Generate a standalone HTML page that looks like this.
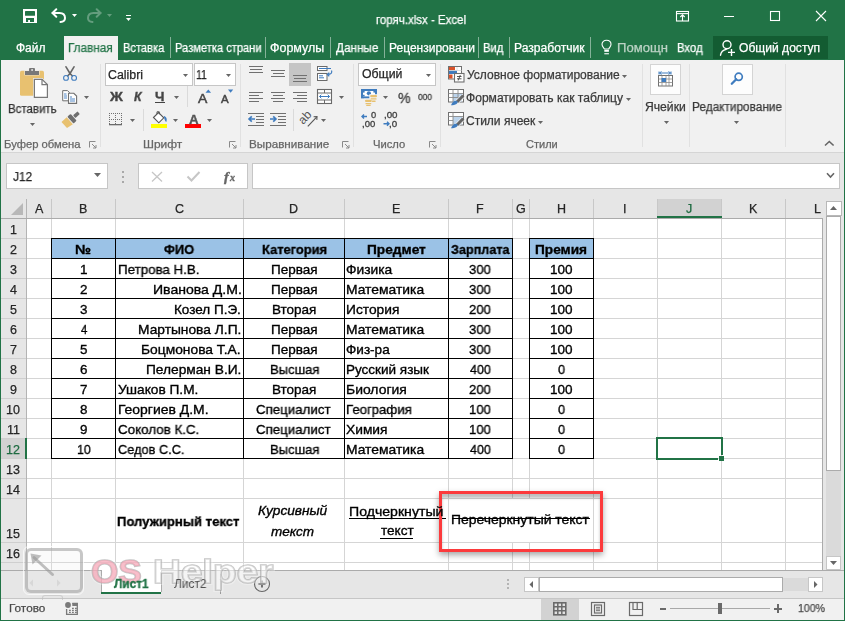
<!DOCTYPE html>
<html><head><meta charset="utf-8"><style>
html,body{margin:0;padding:0;width:845px;height:621px;overflow:hidden;background:#217346}
.a{position:absolute;box-sizing:content-box}
.t{white-space:nowrap;will-change:transform;-webkit-text-stroke-width:0.25px}
svg.a{overflow:visible}
</style></head><body>
<div class="a" style="left:64px;top:36px;width:54px;height:24px;background:#f1f1f1;"></div>
<div class="a" style="left:170px;top:37px;width:1px;height:21px;background:rgba(255,255,255,0.45);"></div>
<div class="a" style="left:265px;top:37px;width:1px;height:21px;background:rgba(255,255,255,0.45);"></div>
<div class="a" style="left:330px;top:37px;width:1px;height:21px;background:rgba(255,255,255,0.45);"></div>
<div class="a" style="left:384px;top:37px;width:1px;height:21px;background:rgba(255,255,255,0.45);"></div>
<div class="a" style="left:478px;top:37px;width:1px;height:21px;background:rgba(255,255,255,0.45);"></div>
<div class="a" style="left:509px;top:37px;width:1px;height:21px;background:rgba(255,255,255,0.45);"></div>
<div class="a" style="left:590px;top:37px;width:1px;height:21px;background:rgba(255,255,255,0.45);"></div>
<div class="a" style="left:713px;top:36px;width:115px;height:23px;background:#135c32;"></div>
<div class="a" style="left:1px;top:60px;width:843px;height:92px;background:#f1f1f1;"></div>
<div class="a" style="left:1px;top:152px;width:843px;height:1px;background:#d5d5d5;"></div>
<div class="a" style="left:100px;top:64px;width:1px;height:83px;background:#e1e1e1;"></div>
<div class="a" style="left:240px;top:64px;width:1px;height:83px;background:#e1e1e1;"></div>
<div class="a" style="left:353px;top:64px;width:1px;height:83px;background:#e1e1e1;"></div>
<div class="a" style="left:440px;top:64px;width:1px;height:83px;background:#e1e1e1;"></div>
<div class="a" style="left:642px;top:64px;width:1px;height:83px;background:#e1e1e1;"></div>
<div class="a" style="left:689px;top:64px;width:1px;height:83px;background:#e1e1e1;"></div>
<div class="a" style="left:785px;top:64px;width:1px;height:83px;background:#e1e1e1;"></div>
<div class="a" style="left:105px;top:63px;width:86px;height:21px;border:1px solid #c6c6c6;background:#fff;"></div>
<div class="a" style="left:194px;top:63px;width:40px;height:21px;border:1px solid #c6c6c6;background:#fff;"></div>
<div class="a" style="left:358px;top:63px;width:76px;height:21px;border:1px solid #c6c6c6;background:#fff;"></div>
<div class="a" style="left:650px;top:64px;width:29px;height:29px;border:1px solid #d4d4d4;background:#fdfdfd;"></div>
<div class="a" style="left:722px;top:64px;width:29px;height:29px;border:1px solid #d4d4d4;background:#fdfdfd;"></div>
<div class="a" style="left:1px;top:153px;width:843px;height:46px;background:#e6e6e6;"></div>
<div class="a" style="left:6px;top:163px;width:100px;height:24px;border:1px solid #c6c6c6;background:#fff;"></div>
<div class="a" style="left:138px;top:163px;width:108px;height:24px;border:1px solid #c6c6c6;background:#fff;"></div>
<div class="a" style="left:252px;top:163px;width:586px;height:24px;border:1px solid #c6c6c6;background:#fff;"></div>
<div class="a" style="left:1px;top:199px;width:822px;height:20px;background:#e6e6e6;"></div>
<div class="a" style="left:1px;top:219px;width:26px;height:351px;background:#e6e6e6;"></div>
<div class="a" style="left:27px;top:219px;width:795px;height:351px;background:#ffffff;"></div>
<div class="a" style="left:51px;top:219px;width:1px;height:351px;background:#d5d5d5;"></div>
<div class="a" style="left:115px;top:219px;width:1px;height:351px;background:#d5d5d5;"></div>
<div class="a" style="left:243px;top:219px;width:1px;height:351px;background:#d5d5d5;"></div>
<div class="a" style="left:344px;top:219px;width:1px;height:351px;background:#d5d5d5;"></div>
<div class="a" style="left:448px;top:219px;width:1px;height:351px;background:#d5d5d5;"></div>
<div class="a" style="left:512px;top:219px;width:1px;height:351px;background:#d5d5d5;"></div>
<div class="a" style="left:529px;top:219px;width:1px;height:351px;background:#d5d5d5;"></div>
<div class="a" style="left:593px;top:219px;width:1px;height:351px;background:#d5d5d5;"></div>
<div class="a" style="left:657px;top:219px;width:1px;height:351px;background:#d5d5d5;"></div>
<div class="a" style="left:721px;top:219px;width:1px;height:351px;background:#d5d5d5;"></div>
<div class="a" style="left:785px;top:219px;width:1px;height:351px;background:#d5d5d5;"></div>
<div class="a" style="left:27px;top:238px;width:795px;height:1px;background:#d5d5d5;"></div>
<div class="a" style="left:27px;top:258px;width:795px;height:1px;background:#d5d5d5;"></div>
<div class="a" style="left:27px;top:278px;width:795px;height:1px;background:#d5d5d5;"></div>
<div class="a" style="left:27px;top:298px;width:795px;height:1px;background:#d5d5d5;"></div>
<div class="a" style="left:27px;top:318px;width:795px;height:1px;background:#d5d5d5;"></div>
<div class="a" style="left:27px;top:338px;width:795px;height:1px;background:#d5d5d5;"></div>
<div class="a" style="left:27px;top:358px;width:795px;height:1px;background:#d5d5d5;"></div>
<div class="a" style="left:27px;top:378px;width:795px;height:1px;background:#d5d5d5;"></div>
<div class="a" style="left:27px;top:398px;width:795px;height:1px;background:#d5d5d5;"></div>
<div class="a" style="left:27px;top:418px;width:795px;height:1px;background:#d5d5d5;"></div>
<div class="a" style="left:27px;top:438px;width:795px;height:1px;background:#d5d5d5;"></div>
<div class="a" style="left:27px;top:458px;width:795px;height:1px;background:#d5d5d5;"></div>
<div class="a" style="left:27px;top:478px;width:795px;height:1px;background:#d5d5d5;"></div>
<div class="a" style="left:27px;top:498px;width:795px;height:1px;background:#d5d5d5;"></div>
<div class="a" style="left:27px;top:542px;width:795px;height:1px;background:#d5d5d5;"></div>
<div class="a" style="left:27px;top:562px;width:795px;height:1px;background:#d5d5d5;"></div>
<div class="a" style="left:512px;top:499px;width:80px;height:43px;background:#ffffff;"></div>
<div class="a" style="left:51px;top:199px;width:1px;height:19px;background:#c8c8c8;"></div>
<div class="a" style="left:115px;top:199px;width:1px;height:19px;background:#c8c8c8;"></div>
<div class="a" style="left:243px;top:199px;width:1px;height:19px;background:#c8c8c8;"></div>
<div class="a" style="left:344px;top:199px;width:1px;height:19px;background:#c8c8c8;"></div>
<div class="a" style="left:448px;top:199px;width:1px;height:19px;background:#c8c8c8;"></div>
<div class="a" style="left:512px;top:199px;width:1px;height:19px;background:#c8c8c8;"></div>
<div class="a" style="left:529px;top:199px;width:1px;height:19px;background:#c8c8c8;"></div>
<div class="a" style="left:593px;top:199px;width:1px;height:19px;background:#c8c8c8;"></div>
<div class="a" style="left:657px;top:199px;width:1px;height:19px;background:#c8c8c8;"></div>
<div class="a" style="left:721px;top:199px;width:1px;height:19px;background:#c8c8c8;"></div>
<div class="a" style="left:785px;top:199px;width:1px;height:19px;background:#c8c8c8;"></div>
<div class="a" style="left:26px;top:199px;width:1px;height:371px;background:#b4b4b4;"></div>
<div class="a" style="left:1px;top:218px;width:822px;height:1px;background:#ababab;"></div>
<div class="a" style="left:1px;top:238px;width:25px;height:1px;background:#cfcfcf;"></div>
<div class="a" style="left:1px;top:258px;width:25px;height:1px;background:#cfcfcf;"></div>
<div class="a" style="left:1px;top:278px;width:25px;height:1px;background:#cfcfcf;"></div>
<div class="a" style="left:1px;top:298px;width:25px;height:1px;background:#cfcfcf;"></div>
<div class="a" style="left:1px;top:318px;width:25px;height:1px;background:#cfcfcf;"></div>
<div class="a" style="left:1px;top:338px;width:25px;height:1px;background:#cfcfcf;"></div>
<div class="a" style="left:1px;top:358px;width:25px;height:1px;background:#cfcfcf;"></div>
<div class="a" style="left:1px;top:378px;width:25px;height:1px;background:#cfcfcf;"></div>
<div class="a" style="left:1px;top:398px;width:25px;height:1px;background:#cfcfcf;"></div>
<div class="a" style="left:1px;top:418px;width:25px;height:1px;background:#cfcfcf;"></div>
<div class="a" style="left:1px;top:438px;width:25px;height:1px;background:#cfcfcf;"></div>
<div class="a" style="left:1px;top:458px;width:25px;height:1px;background:#cfcfcf;"></div>
<div class="a" style="left:1px;top:478px;width:25px;height:1px;background:#cfcfcf;"></div>
<div class="a" style="left:1px;top:498px;width:25px;height:1px;background:#cfcfcf;"></div>
<div class="a" style="left:1px;top:542px;width:25px;height:1px;background:#cfcfcf;"></div>
<div class="a" style="left:1px;top:562px;width:25px;height:1px;background:#cfcfcf;"></div>
<div class="a" style="left:658px;top:199px;width:63px;height:19px;background:#d2d2d2;"></div>
<div class="a" style="left:657px;top:216px;width:65px;height:2px;background:#217346;"></div>
<div class="a" style="left:1px;top:439px;width:25px;height:19px;background:#d2d2d2;"></div>
<div class="a" style="left:25px;top:438px;width:2px;height:21px;background:#217346;"></div>
<svg class="a" style="left:11px;top:203px;" width="13" height="13" viewBox="0 0 13 13"><path d="M12 0 L12 12 L0 12 Z" fill="#b8b8b8"/></svg>
<div class="a" style="left:822px;top:219px;width:1px;height:351px;background:#ababab;"></div>
<div class="a" style="left:823px;top:199px;width:21px;height:371px;background:#e6e6e6;"></div>
<div class="a" style="left:826px;top:201px;width:14px;height:13px;border:1px solid #b8b8b8;background:#fff;"></div>
<div class="a" style="left:826px;top:216px;width:13px;height:253px;border:1px solid #ababab;background:#fff;"></div>
<div class="a" style="left:826px;top:471px;width:15px;height:85px;background:#dadada;"></div>
<div class="a" style="left:826px;top:556px;width:13px;height:12px;border:1px solid #c6c6c6;background:#fff;"></div>
<svg class="a" style="left:829px;top:204px;" width="9" height="8" viewBox="0 0 9 8"><path d="M1 6 L4.5 2 L8 6 Z" fill="#666"/></svg>
<svg class="a" style="left:829px;top:559px;" width="9" height="8" viewBox="0 0 9 8"><path d="M1 2 L4.5 6 L8 2 Z" fill="#666"/></svg>
<div class="a" style="left:1px;top:570px;width:843px;height:1px;background:#ababab;"></div>
<div class="a" style="left:1px;top:571px;width:843px;height:27px;background:#e6e6e6;"></div>
<div class="a" style="left:1px;top:598px;width:843px;height:1px;background:#c6c6c6;"></div>
<div class="a" style="left:1px;top:599px;width:843px;height:21px;background:#f1f1f1;"></div>
<div class="a" style="left:101px;top:570px;width:60px;height:24px;background:#ffffff;"></div>
<div class="a" style="left:101px;top:592px;width:60px;height:2px;background:#217346;"></div>
<div class="a" style="left:101px;top:570px;width:1px;height:22px;background:#ababab;"></div>
<div class="a" style="left:161px;top:570px;width:1px;height:22px;background:#ababab;"></div>
<div class="a" style="left:220px;top:574px;width:1px;height:20px;background:#9a9a9a;"></div>
<div class="a" style="left:524px;top:577px;width:13px;height:13px;border:1px solid #c6c6c6;background:#fff;"></div>
<div class="a" style="left:539px;top:577px;width:242px;height:13px;border:1px solid #ababab;background:#fff;"></div>
<div class="a" style="left:783px;top:578px;width:25px;height:13px;background:#dadada;"></div>
<div class="a" style="left:808px;top:577px;width:13px;height:13px;border:1px solid #c6c6c6;background:#fff;"></div>
<div class="a" style="left:541px;top:599px;width:38px;height:21px;background:#d2d2d2;"></div>
<div class="a" style="left:51px;top:239px;width:493px;height:0px;"></div>
<div class="a" style="left:52px;top:239px;width:396px;height:19px;background:#9bc2e6;"></div>
<div class="a" style="left:449px;top:239px;width:63px;height:19px;background:#9bc2e6;"></div>
<div class="a" style="left:530px;top:239px;width:63px;height:19px;background:#9bc2e6;"></div>
<div class="a" style="left:51px;top:238px;width:462px;height:1px;background:#000000;"></div>
<div class="a" style="left:51px;top:258px;width:462px;height:1px;background:#000000;"></div>
<div class="a" style="left:51px;top:278px;width:462px;height:1px;background:#000000;"></div>
<div class="a" style="left:51px;top:298px;width:462px;height:1px;background:#000000;"></div>
<div class="a" style="left:51px;top:318px;width:462px;height:1px;background:#000000;"></div>
<div class="a" style="left:51px;top:338px;width:462px;height:1px;background:#000000;"></div>
<div class="a" style="left:51px;top:358px;width:462px;height:1px;background:#000000;"></div>
<div class="a" style="left:51px;top:378px;width:462px;height:1px;background:#000000;"></div>
<div class="a" style="left:51px;top:398px;width:462px;height:1px;background:#000000;"></div>
<div class="a" style="left:51px;top:418px;width:462px;height:1px;background:#000000;"></div>
<div class="a" style="left:51px;top:438px;width:462px;height:1px;background:#000000;"></div>
<div class="a" style="left:51px;top:458px;width:462px;height:1px;background:#000000;"></div>
<div class="a" style="left:51px;top:238px;width:1px;height:221px;background:#000000;"></div>
<div class="a" style="left:115px;top:238px;width:1px;height:221px;background:#000000;"></div>
<div class="a" style="left:243px;top:238px;width:1px;height:221px;background:#000000;"></div>
<div class="a" style="left:344px;top:238px;width:1px;height:221px;background:#000000;"></div>
<div class="a" style="left:448px;top:238px;width:1px;height:221px;background:#000000;"></div>
<div class="a" style="left:512px;top:238px;width:1px;height:221px;background:#000000;"></div>
<div class="a" style="left:529px;top:238px;width:65px;height:1px;background:#000000;"></div>
<div class="a" style="left:529px;top:258px;width:65px;height:1px;background:#000000;"></div>
<div class="a" style="left:529px;top:278px;width:65px;height:1px;background:#000000;"></div>
<div class="a" style="left:529px;top:298px;width:65px;height:1px;background:#000000;"></div>
<div class="a" style="left:529px;top:318px;width:65px;height:1px;background:#000000;"></div>
<div class="a" style="left:529px;top:338px;width:65px;height:1px;background:#000000;"></div>
<div class="a" style="left:529px;top:358px;width:65px;height:1px;background:#000000;"></div>
<div class="a" style="left:529px;top:378px;width:65px;height:1px;background:#000000;"></div>
<div class="a" style="left:529px;top:398px;width:65px;height:1px;background:#000000;"></div>
<div class="a" style="left:529px;top:418px;width:65px;height:1px;background:#000000;"></div>
<div class="a" style="left:529px;top:438px;width:65px;height:1px;background:#000000;"></div>
<div class="a" style="left:529px;top:458px;width:65px;height:1px;background:#000000;"></div>
<div class="a" style="left:529px;top:238px;width:1px;height:221px;background:#000000;"></div>
<div class="a" style="left:593px;top:238px;width:1px;height:221px;background:#000000;"></div>
<div class="a" style="left:349px;top:518px;width:97px;height:1px;background:#000000;"></div>
<div class="a" style="left:380px;top:538px;width:33px;height:1px;background:#000000;"></div>
<div class="a" style="left:452px;top:518px;width:138px;height:1px;background:#000000;"></div>
<div class="a" style="left:656px;top:437px;width:67px;height:2px;background:#217346;"></div>
<div class="a" style="left:656px;top:458px;width:62px;height:2px;background:#217346;"></div>
<div class="a" style="left:656px;top:437px;width:2px;height:23px;background:#217346;"></div>
<div class="a" style="left:721px;top:437px;width:2px;height:18px;background:#217346;"></div>
<div class="a" style="left:719px;top:456px;width:5px;height:5px;background:#217346;"></div>
<svg class="a" style="left:23px;top:9px;" width="14" height="14" viewBox="0 0 14 14"><rect x="0" y="0" width="14" height="14" fill="#fff"/><rect x="2" y="1.9" width="10" height="4.9" rx="0.6" fill="#217346"/><rect x="3" y="9" width="8" height="4" fill="#217346"/><rect x="5.1" y="11" width="1.9" height="2" fill="#fff"/></svg>
<svg class="a" style="left:50px;top:7px;" width="18" height="17" viewBox="0 0 18 17"><path d="M2.5 6 H9.5 C13.5 6 15 8.5 15 11 C15 13.5 13.5 14.8 10.5 15" fill="none" stroke="#fff" stroke-width="2" stroke-linecap="round"/><path d="M6.3 2.3 L2.5 6 L6.3 9.7" fill="none" stroke="#fff" stroke-width="2" stroke-linecap="round" stroke-linejoin="round"/></svg>
<svg class="a" style="left:72px;top:14px;" width="5" height="3" viewBox="0 0 5 3"><path d="M0 0 L5 0 L2.5 3 Z" fill="#fff"/></svg>
<svg class="a" style="left:85px;top:7px;opacity:0.3" width="18" height="17" viewBox="0 0 18 17"><g transform="translate(18 0) scale(-1 1)"><path d="M2.5 6 H9.5 C13.5 6 15 8.5 15 11 C15 13.5 13.5 14.8 10.5 15" fill="none" stroke="#fff" stroke-width="2" stroke-linecap="round"/><path d="M6.3 2.3 L2.5 6 L6.3 9.7" fill="none" stroke="#fff" stroke-width="2" stroke-linecap="round" stroke-linejoin="round"/></g></svg>
<svg class="a" style="left:107px;top:14px;" width="5" height="3" viewBox="0 0 5 3"><path d="M0 0 L5 0 L2.5 3 Z" fill="rgba(255,255,255,0.3)"/></svg>
<div class="a" style="left:126px;top:15px;width:5px;height:1px;background:#fff;"></div>
<svg class="a" style="left:126px;top:18px;" width="5" height="3" viewBox="0 0 5 3"><path d="M0 0 L5 0 L2.5 3 Z" fill="#fff"/></svg>
<svg class="a" style="left:675px;top:10px;" width="15" height="12" viewBox="0 0 15 12"><rect x="1.5" y="1.5" width="12" height="9.5" fill="none" stroke="#fff" stroke-width="1.1"/><path d="M2 3.6 H13" stroke="#fff" stroke-width="1.1"/><path d="M7.5 11 V5 M5.3 7 L7.5 4.8 L9.7 7" fill="none" stroke="#fff" stroke-width="1.1"/></svg>
<div class="a" style="left:724px;top:16px;width:10px;height:1px;background:#fff;"></div>
<svg class="a" style="left:769px;top:10px;" width="12" height="12" viewBox="0 0 12 12"><rect x="1.5" y="1.5" width="9" height="9" fill="none" stroke="#fff" stroke-width="1.1"/></svg>
<svg class="a" style="left:815px;top:10px;" width="12" height="12" viewBox="0 0 12 12"><path d="M1 1 L11 11 M11 1 L1 11" stroke="#fff" stroke-width="1.1"/></svg>
<svg class="a" style="left:600px;top:38px;" width="14" height="18" viewBox="0 0 14 18"><path d="M4.5 11 C3.5 9.5 2 8.5 2 6.3 C2 3.8 4 2.2 6.5 2.2 C9 2.2 11 3.8 11 6.3 C11 8.5 9.5 9.5 8.7 11 Z" fill="none" stroke="#fff" stroke-width="1.1"/><rect x="4.3" y="11.8" width="4.6" height="2" fill="#fff"/><rect x="4.3" y="15.2" width="4.6" height="1.1" fill="#fff"/></svg>
<svg class="a" style="left:718px;top:38px;" width="20" height="20" viewBox="0 0 20 20"><circle cx="9" cy="6.7" r="4" fill="none" stroke="#fff" stroke-width="1.4"/><path d="M2.5 17.2 C3 14 5 12 8.2 11.4" fill="none" stroke="#fff" stroke-width="1.4" stroke-linecap="round"/><path d="M10 14.4 H17 M13.5 11 V18" stroke="#fff" stroke-width="1.4"/></svg>
<svg class="a" style="left:18px;top:66px;" width="32" height="34" viewBox="0 0 32 34"><rect x="2" y="4.8" width="24" height="25" rx="1.6" fill="#e8c170"/><rect x="6.5" y="4.3" width="15" height="5" fill="#f1f1f1"/><rect x="7" y="5" width="14" height="4" fill="#787878"/><rect x="11" y="2" width="6" height="3.5" rx="1" fill="#787878"/><rect x="13.3" y="3.2" width="1.6" height="1.6" fill="#f1f1f1"/><path d="M15.2 12 H24.4 L30.4 17.8 V32.4 H15.2 Z" fill="#f1f1f1"/><path d="M16.4 13.3 H24 L29.4 18.6 V31.3 H16.4 Z" fill="#fff" stroke="#787878" stroke-width="1.2"/><path d="M24 13.3 V18.6 H29.4" fill="none" stroke="#787878" stroke-width="1.2"/></svg>
<svg class="a" style="left:61px;top:65px;" width="18" height="17" viewBox="0 0 18 17"><path d="M5 1.8 L9 8.5 M13 1.8 L9 8.5 M9 8.5 L6.8 10.8 M9 8.5 L11.2 10.8" stroke="#666" stroke-width="1.6" stroke-linecap="round"/><circle cx="5" cy="12.9" r="2.4" fill="none" stroke="#3f7cbf" stroke-width="1.1"/><circle cx="13.1" cy="12.9" r="2.4" fill="none" stroke="#3f7cbf" stroke-width="1.1"/></svg>
<svg class="a" style="left:61px;top:89px;" width="18" height="16" viewBox="0 0 18 16"><path d="M1.7 1.6 H6.5 L8.5 3.6 V11.8 H1.7 Z" fill="#fff" stroke="#707070" stroke-width="1"/><path d="M3 5 H5.5 M3 7 H6 M3 9 H6" stroke="#3f7cbf" stroke-width="0.9"/><path d="M7.5 4.3 H12.8 L15.6 7.1 V14.4 H7.5 Z" fill="#fff" stroke="#707070" stroke-width="1.1"/><path d="M9 8 H11 M9 10 H14 M9 12 H14" stroke="#3f7cbf" stroke-width="0.9"/></svg>
<svg class="a" style="left:84px;top:96px;" width="5" height="3" viewBox="0 0 5 3"><path d="M0 0 L5 0 L2.5 3 Z" fill="#666666"/></svg>
<svg class="a" style="left:60px;top:108px;" width="20" height="20" viewBox="0 0 20 20"><g transform="translate(12 10.7) rotate(-42)"><path d="M-3 -4.6 L-3 4.6 L-10 3.6 L-10 -4.6 Z" fill="#e8c170"/><rect x="-2.2" y="-4.6" width="4.4" height="9.2" rx="1" fill="#6e6e6e"/><rect x="3" y="-1.8" width="6" height="3.6" rx="0.8" fill="#6e6e6e"/></g></svg>
<svg class="a" style="left:30px;top:123px;" width="5" height="3" viewBox="0 0 5 3"><path d="M0 0 L5 0 L2.5 3 Z" fill="#666666"/></svg>
<svg class="a" style="left:89px;top:141px;" width="8" height="8" viewBox="0 0 8 8"><path d="M0.5 6.5 V0.5 H6.5" fill="none" stroke="#8a8a8a" stroke-width="1"/><path d="M3 3 L7 7 M7 4 V7 H4" fill="none" stroke="#8a8a8a" stroke-width="1"/></svg>
<svg class="a" style="left:229px;top:141px;" width="8" height="8" viewBox="0 0 8 8"><path d="M0.5 6.5 V0.5 H6.5" fill="none" stroke="#8a8a8a" stroke-width="1"/><path d="M3 3 L7 7 M7 4 V7 H4" fill="none" stroke="#8a8a8a" stroke-width="1"/></svg>
<svg class="a" style="left:342px;top:141px;" width="8" height="8" viewBox="0 0 8 8"><path d="M0.5 6.5 V0.5 H6.5" fill="none" stroke="#8a8a8a" stroke-width="1"/><path d="M3 3 L7 7 M7 4 V7 H4" fill="none" stroke="#8a8a8a" stroke-width="1"/></svg>
<svg class="a" style="left:429px;top:141px;" width="8" height="8" viewBox="0 0 8 8"><path d="M0.5 6.5 V0.5 H6.5" fill="none" stroke="#8a8a8a" stroke-width="1"/><path d="M3 3 L7 7 M7 4 V7 H4" fill="none" stroke="#8a8a8a" stroke-width="1"/></svg>
<svg class="a" style="left:183px;top:74px;" width="5" height="3" viewBox="0 0 5 3"><path d="M0 0 L5 0 L2.5 3 Z" fill="#666666"/></svg>
<svg class="a" style="left:226px;top:74px;" width="5" height="3" viewBox="0 0 5 3"><path d="M0 0 L5 0 L2.5 3 Z" fill="#666666"/></svg>
<div class="a" style="left:155px;top:102px;width:10px;height:1px;background:#444444;"></div>
<svg class="a" style="left:174px;top:96px;" width="5" height="3" viewBox="0 0 5 3"><path d="M0 0 L5 0 L2.5 3 Z" fill="#666666"/></svg>
<div class="a" style="left:187px;top:86px;width:1px;height:21px;background:#dadada;"></div>
<svg class="a" style="left:205px;top:89px;" width="7" height="4" viewBox="0 0 7 4"><path d="M0.5 3.8 L3.3 0.5 L6.1 3.8 Z" fill="#3f7cbf"/></svg>
<svg class="a" style="left:228px;top:89px;" width="6" height="4" viewBox="0 0 6 4"><path d="M0 0.5 L5.2 0.5 L2.6 3.8 Z" fill="#3f7cbf"/></svg>
<svg class="a" style="left:108px;top:112px;" width="16" height="15" viewBox="0 0 16 15"><rect x="1" y="1" width="1" height="1" fill="#707070"/><rect x="1" y="3" width="1" height="1" fill="#707070"/><rect x="1" y="5" width="1" height="1" fill="#707070"/><rect x="1" y="7" width="1" height="1" fill="#707070"/><rect x="1" y="9" width="1" height="1" fill="#707070"/><rect x="1" y="11" width="1" height="1" fill="#707070"/><rect x="3" y="1" width="1" height="1" fill="#707070"/><rect x="3" y="7" width="1" height="1" fill="#707070"/><rect x="5" y="1" width="1" height="1" fill="#707070"/><rect x="5" y="7" width="1" height="1" fill="#707070"/><rect x="7" y="1" width="1" height="1" fill="#707070"/><rect x="7" y="3" width="1" height="1" fill="#707070"/><rect x="7" y="5" width="1" height="1" fill="#707070"/><rect x="7" y="7" width="1" height="1" fill="#707070"/><rect x="7" y="9" width="1" height="1" fill="#707070"/><rect x="7" y="11" width="1" height="1" fill="#707070"/><rect x="9" y="1" width="1" height="1" fill="#707070"/><rect x="9" y="7" width="1" height="1" fill="#707070"/><rect x="11" y="1" width="1" height="1" fill="#707070"/><rect x="11" y="7" width="1" height="1" fill="#707070"/><rect x="13" y="1" width="1" height="1" fill="#707070"/><rect x="13" y="3" width="1" height="1" fill="#707070"/><rect x="13" y="5" width="1" height="1" fill="#707070"/><rect x="13" y="7" width="1" height="1" fill="#707070"/><rect x="13" y="9" width="1" height="1" fill="#707070"/><rect x="13" y="11" width="1" height="1" fill="#707070"/><rect x="1" y="12" width="13" height="1.3" fill="#6a6a6a"/></svg>
<svg class="a" style="left:130px;top:119px;" width="5" height="3" viewBox="0 0 5 3"><path d="M0 0 L5 0 L2.5 3 Z" fill="#666666"/></svg>
<div class="a" style="left:143px;top:109px;width:1px;height:22px;background:#dadada;"></div>
<svg class="a" style="left:151px;top:111px;" width="18" height="13" viewBox="0 0 18 13"><path d="M2.5 6.5 L7.5 1.5 L12.8 6.8 L7.8 11.8 Z" fill="#fff" stroke="#555" stroke-width="1.1"/><path d="M6 3 V0.8 H8.3 V3.3" fill="none" stroke="#555" stroke-width="1"/><path d="M13 5 C15 5.5 16.5 7.5 15.3 11 C14 10.2 13 8 13 5 Z" fill="#3f7cbf"/></svg>
<div class="a" style="left:151px;top:124px;width:16px;height:4px;background:#ffff00;"></div>
<svg class="a" style="left:173px;top:119px;" width="5" height="3" viewBox="0 0 5 3"><path d="M0 0 L5 0 L2.5 3 Z" fill="#666666"/></svg>
<div class="a" style="left:185px;top:124px;width:16px;height:4px;background:#ff0000;"></div>
<svg class="a" style="left:207px;top:119px;" width="5" height="3" viewBox="0 0 5 3"><path d="M0 0 L5 0 L2.5 3 Z" fill="#666666"/></svg>
<div class="a" style="left:249px;top:66px;width:14px;height:1px;background:#707070;"></div>
<div class="a" style="left:250px;top:69px;width:12px;height:1px;background:#707070;"></div>
<div class="a" style="left:249px;top:72px;width:14px;height:1px;background:#707070;"></div>
<div class="a" style="left:271px;top:70px;width:14px;height:1px;background:#707070;"></div>
<div class="a" style="left:272.5px;top:73px;width:11.0px;height:1px;background:#707070;"></div>
<div class="a" style="left:271px;top:76px;width:14px;height:1px;background:#707070;"></div>
<div class="a" style="left:289px;top:63px;width:22px;height:23px;background:#c5c5c5;"></div>
<div class="a" style="left:293px;top:75px;width:14px;height:1px;background:#707070;"></div>
<div class="a" style="left:294px;top:78px;width:12px;height:1px;background:#707070;"></div>
<div class="a" style="left:293px;top:81px;width:14px;height:1px;background:#707070;"></div>
<div class="a" style="left:249px;top:92px;width:14px;height:1px;background:#707070;"></div>
<div class="a" style="left:249px;top:95px;width:10px;height:1px;background:#707070;"></div>
<div class="a" style="left:249px;top:98px;width:14px;height:1px;background:#707070;"></div>
<div class="a" style="left:249px;top:101px;width:10px;height:1px;background:#707070;"></div>
<div class="a" style="left:271px;top:92px;width:14px;height:1px;background:#707070;"></div>
<div class="a" style="left:273px;top:95px;width:10px;height:1px;background:#707070;"></div>
<div class="a" style="left:271px;top:98px;width:14px;height:1px;background:#707070;"></div>
<div class="a" style="left:273px;top:101px;width:10px;height:1px;background:#707070;"></div>
<div class="a" style="left:293px;top:92px;width:14px;height:1px;background:#707070;"></div>
<div class="a" style="left:297px;top:95px;width:10px;height:1px;background:#707070;"></div>
<div class="a" style="left:293px;top:98px;width:14px;height:1px;background:#707070;"></div>
<div class="a" style="left:297px;top:101px;width:10px;height:1px;background:#707070;"></div>
<svg class="a" style="left:316px;top:65px;" width="18" height="17" viewBox="0 0 18 17"><rect x="1.5" y="1.5" width="9.5" height="4" fill="#fff" stroke="#6a6a6a" stroke-width="1"/><rect x="1.5" y="8.5" width="9.5" height="7" fill="#fff" stroke="#6a6a6a" stroke-width="1"/><path d="M3 3.5 H15" stroke="#3f7cbf" stroke-width="1"/><path d="M3 10.8 H7 M3 12.8 H8" stroke="#3f7cbf" stroke-width="1"/><path d="M15.5 5.5 C16.5 8 15 9.5 11.5 9.5 M13.3 7.8 L11.3 9.5 L13.3 11.2" fill="none" stroke="#3f7cbf" stroke-width="1.2"/></svg>
<svg class="a" style="left:316px;top:88px;" width="17" height="17" viewBox="0 0 17 17"><rect x="1.5" y="1.5" width="14" height="14" fill="#fff" stroke="#6a6a6a" stroke-width="1.1"/><path d="M1.5 5 H15.5 M1.5 12 H15.5 M8.5 1.5 V5 M8.5 12 V15.5" stroke="#6a6a6a" stroke-width="1"/><path d="M3.5 8.5 H13.5" stroke="#3f7cbf" stroke-width="1"/><path d="M5.3 6.7 L3.5 8.5 L5.3 10.3 M11.7 6.7 L13.5 8.5 L11.7 10.3" fill="none" stroke="#3f7cbf" stroke-width="1"/></svg>
<svg class="a" style="left:339px;top:96px;" width="5" height="3" viewBox="0 0 5 3"><path d="M0 0 L5 0 L2.5 3 Z" fill="#666666"/></svg>
<div class="a" style="left:248px;top:113px;width:16px;height:1px;background:#707070;"></div>
<div class="a" style="left:256px;top:116px;width:8px;height:1px;background:#707070;"></div>
<div class="a" style="left:256px;top:119px;width:8px;height:1px;background:#707070;"></div>
<div class="a" style="left:256px;top:122px;width:8px;height:1px;background:#707070;"></div>
<div class="a" style="left:248px;top:125px;width:16px;height:1px;background:#707070;"></div>
<svg class="a" style="left:247px;top:115px;" width="9" height="8" viewBox="0 0 9 8"><path d="M8 4 H2.5 M4.8 1.3 L2 4 L4.8 6.7" fill="none" stroke="#3f7cbf" stroke-width="1.6"/></svg>
<div class="a" style="left:270px;top:113px;width:16px;height:1px;background:#707070;"></div>
<div class="a" style="left:278px;top:116px;width:8px;height:1px;background:#707070;"></div>
<div class="a" style="left:278px;top:119px;width:8px;height:1px;background:#707070;"></div>
<div class="a" style="left:278px;top:122px;width:8px;height:1px;background:#707070;"></div>
<div class="a" style="left:270px;top:125px;width:16px;height:1px;background:#707070;"></div>
<svg class="a" style="left:269px;top:115px;" width="9" height="8" viewBox="0 0 9 8"><path d="M1 4 H6.5 M4.2 1.3 L7 4 L4.2 6.7" fill="none" stroke="#3f7cbf" stroke-width="1.6"/></svg>
<div class="a" style="left:293px;top:109px;width:1px;height:22px;background:#dadada;"></div>
<svg class="a" style="left:299px;top:110px;" width="20" height="18" viewBox="0 0 20 18"><text x="0" y="0" transform="translate(4.3 15) rotate(-48)" font-family="Liberation Sans" font-size="12" fill="#555">ab</text><path d="M8.8 16.3 L17.6 7.2" stroke="#555" stroke-width="1.1"/><path d="M14.6 6.8 L18 6.5 L17.8 9.9" fill="none" stroke="#555" stroke-width="1.1"/></svg>
<svg class="a" style="left:321px;top:119px;" width="5" height="3" viewBox="0 0 5 3"><path d="M0 0 L5 0 L2.5 3 Z" fill="#666666"/></svg>
<svg class="a" style="left:426px;top:74px;" width="5" height="3" viewBox="0 0 5 3"><path d="M0 0 L5 0 L2.5 3 Z" fill="#666666"/></svg>
<svg class="a" style="left:358px;top:86px;" width="22" height="22" viewBox="0 0 22 22"><rect x="4" y="4" width="14" height="7.4" fill="#fff" stroke="#3f7cbf" stroke-width="2"/><rect x="5" y="5" width="1.6" height="1.6" fill="#3f7cbf"/><rect x="15.4" y="5" width="1.6" height="1.6" fill="#3f7cbf"/><rect x="5" y="8.8" width="1.6" height="1.6" fill="#3f7cbf"/><circle cx="10.9" cy="7.3" r="2.1" fill="#3f7cbf"/><rect x="11.3" y="8.2" width="8.5" height="9" fill="#f1f1f1"/><rect x="6" y="12.6" width="8.4" height="7" fill="#f1f1f1"/><rect x="12.2" y="9" width="6.8" height="2.3" rx="1.1" fill="#e8c170"/><rect x="12.6" y="12.2" width="6" height="1.3" rx="0.6" fill="#e8c170"/><rect x="13.9" y="14.6" width="3.8" height="1.3" rx="0.6" fill="#e8c170"/><rect x="7" y="13.8" width="6.8" height="2.3" rx="1.1" fill="#e8c170"/><rect x="7.4" y="17" width="6" height="1.3" rx="0.6" fill="#e8c170"/><rect x="8.2" y="18.7" width="4.5" height="1.3" rx="0.6" fill="#e8c170"/></svg>
<svg class="a" style="left:383px;top:96px;" width="5" height="3" viewBox="0 0 5 3"><path d="M0 0 L5 0 L2.5 3 Z" fill="#666666"/></svg>
<svg class="a" style="left:360px;top:111px;" width="18" height="18" viewBox="0 0 18 18"><path d="M7 5.5 H2 M4 3.5 L2 5.5 L4 7.5" fill="none" stroke="#3f7cbf" stroke-width="1.4"/></svg>
<svg class="a" style="left:382px;top:119px;" width="10" height="8" viewBox="0 0 10 8"><path d="M1.5 4.7 H7 M5 2.7 L7 4.7 L5 6.7" fill="none" stroke="#3f7cbf" stroke-width="1.4"/></svg>
<svg class="a" style="left:447px;top:65px;" width="19" height="18" viewBox="0 0 19 18"><rect x="1.5" y="1.5" width="13" height="12.5" fill="#fff" stroke="#707070" stroke-width="1"/><rect x="2" y="2" width="6" height="3.5" fill="#d9532b"/><rect x="2" y="5.5" width="8" height="3.5" fill="#3f7cbf"/><rect x="2" y="9.5" width="3.5" height="4" fill="#d9532b"/><path d="M10 2 V5.5 M2 5.5 H14.5" stroke="#d8d8d8" stroke-width="0.8"/><rect x="7.5" y="8.5" width="9.5" height="8.5" fill="#fff" stroke="#707070" stroke-width="1.1"/><path d="M10 11.5 H14.5 M10 13.8 H14.5 M13.3 10 L11.2 15.5" stroke="#444" stroke-width="0.9"/></svg>
<svg class="a" style="left:447px;top:88px;" width="19" height="18" viewBox="0 0 19 18"><rect x="1.5" y="1.5" width="15" height="12.5" fill="#fff" stroke="#707070" stroke-width="1"/><rect x="6" y="5.5" width="9" height="8" fill="#bcd4ec"/><path d="M1.5 5.5 H16 M1.5 9.5 H16 M6 1.5 V14 M11 1.5 V14" stroke="#8a8a8a" stroke-width="0.9"/><path d="M9 15 L15.5 8.5" stroke="#f1f1f1" stroke-width="4.5"/><path d="M10 14 L16.3 7.5" stroke="#666" stroke-width="3"/><path d="M4 17.3 C5 14.5 7 12.5 9.5 12.8 C11 13 11 15 9.5 16 C8 17 6 17.3 4 17.3 Z" fill="#3f7cbf"/></svg>
<svg class="a" style="left:447px;top:111px;" width="19" height="18" viewBox="0 0 19 18"><rect x="1.5" y="1.5" width="15" height="12.5" fill="#fff" stroke="#707070" stroke-width="1"/><rect x="6" y="5.5" width="9" height="8" fill="#bcd4ec"/><path d="M1.5 5.5 H16 M1.5 9.5 H6 M6 1.5 V14" stroke="#8a8a8a" stroke-width="0.9"/><path d="M9 15 L15.5 8.5" stroke="#f1f1f1" stroke-width="4.5"/><path d="M10 14 L16.3 7.5" stroke="#666" stroke-width="3"/><path d="M4 17.3 C5 14.5 7 12.5 9.5 12.8 C11 13 11 15 9.5 16 C8 17 6 17.3 4 17.3 Z" fill="#3f7cbf"/></svg>
<svg class="a" style="left:622px;top:75px;" width="5" height="3" viewBox="0 0 5 3"><path d="M0 0 L5 0 L2.5 3 Z" fill="#666666"/></svg>
<svg class="a" style="left:626px;top:98px;" width="5" height="3" viewBox="0 0 5 3"><path d="M0 0 L5 0 L2.5 3 Z" fill="#666666"/></svg>
<svg class="a" style="left:538px;top:121px;" width="5" height="3" viewBox="0 0 5 3"><path d="M0 0 L5 0 L2.5 3 Z" fill="#666666"/></svg>
<svg class="a" style="left:656px;top:69px;" width="19" height="20" viewBox="0 0 19 20"><path d="M3 2.5 V5.5 M15 2.5 V5.5 M3.5 4 H14.5 M5.5 2.5 L3.5 4 L5.5 5.5 M12.5 2.5 L14.5 4 L12.5 5.5" fill="none" stroke="#3f7cbf" stroke-width="1"/><rect x="2.5" y="6.5" width="14" height="10.5" fill="#fff" stroke="#707070" stroke-width="1"/><path d="M2.5 10 H16.5 M2.5 13.5 H16.5 M6 6.5 V17 M10 6.5 V17 M13 6.5 V17" stroke="#8a8a8a" stroke-width="0.8"/><rect x="5.5" y="9" width="4.5" height="4" fill="#3f7cbf"/></svg>
<svg class="a" style="left:664px;top:121px;" width="5" height="3" viewBox="0 0 5 3"><path d="M0 0 L5 0 L2.5 3 Z" fill="#666666"/></svg>
<svg class="a" style="left:728px;top:70px;" width="16" height="16" viewBox="0 0 16 16"><circle cx="10.7" cy="6.8" r="3.6" fill="none" stroke="#3f7cbf" stroke-width="1.7"/><path d="M8.2 9.3 L3.8 13.7" stroke="#3f7cbf" stroke-width="2.3" stroke-linecap="round"/></svg>
<svg class="a" style="left:734px;top:121px;" width="5" height="3" viewBox="0 0 5 3"><path d="M0 0 L5 0 L2.5 3 Z" fill="#666666"/></svg>
<svg class="a" style="left:824px;top:140px;" width="11" height="7" viewBox="0 0 11 7"><path d="M1 5.5 L5.3 1.5 L9.6 5.5" fill="none" stroke="#666" stroke-width="1.6"/></svg>
<svg class="a" style="left:94px;top:173px;" width="7" height="4" viewBox="0 0 7 4"><path d="M0 0 L7 0 L3.5 4 Z" fill="#666666"/></svg>
<div class="a" style="left:122px;top:171px;width:2px;height:2px;background:#a8a8a8;"></div>
<div class="a" style="left:122px;top:176px;width:2px;height:2px;background:#a8a8a8;"></div>
<div class="a" style="left:122px;top:181px;width:2px;height:2px;background:#a8a8a8;"></div>
<svg class="a" style="left:150px;top:170px;" width="14" height="13" viewBox="0 0 14 13"><path d="M2 2 L12 11.5 M12 2 L2 11.5" stroke="#c6c6c6" stroke-width="1.3"/></svg>
<svg class="a" style="left:186px;top:170px;" width="15" height="13" viewBox="0 0 15 13"><path d="M1.5 6.5 L5.5 10.5 L13.5 2" fill="none" stroke="#c6c6c6" stroke-width="2"/></svg>
<svg class="a" style="left:826px;top:172px;" width="9" height="7" viewBox="0 0 9 7"><path d="M1 1.3 L4.5 5 L8 1.3" fill="none" stroke="#666" stroke-width="1.6"/></svg>
<svg class="a" style="left:527px;top:580px;" width="9" height="9" viewBox="0 0 9 9"><path d="M6 1 L2.5 4.5 L6 8 Z" fill="#666"/></svg>
<svg class="a" style="left:811px;top:580px;" width="9" height="9" viewBox="0 0 9 9"><path d="M3 1 L6.5 4.5 L3 8 Z" fill="#666"/></svg>
<div class="a" style="left:507px;top:579px;width:2px;height:2px;background:#b4b4b4;"></div>
<div class="a" style="left:507px;top:583px;width:2px;height:2px;background:#b4b4b4;"></div>
<div class="a" style="left:507px;top:587px;width:2px;height:2px;background:#b4b4b4;"></div>
<svg class="a" style="left:253px;top:575px;" width="18" height="18" viewBox="0 0 18 18"><circle cx="9" cy="9" r="7.5" fill="none" stroke="#666" stroke-width="1.1"/><path d="M9 5.5 V12.5 M5.5 9 H12.5" stroke="#666" stroke-width="1.8"/></svg>
<svg class="a" style="left:64px;top:601px;" width="16" height="16" viewBox="0 0 16 16"><circle cx="4" cy="4" r="2.9" fill="#7a7a7a"/><path d="M2.6 8 V13.3 H13.3 V2.5 H8.3" fill="none" stroke="#7a7a7a" stroke-width="1.3"/><rect x="8.3" y="2" width="5.6" height="3" fill="#7a7a7a"/><path d="M8 7.4 H9.8 M11 7.4 H12.8 M5 9.4 H6.8 M8 9.4 H9.8 M11 9.4 H12.8 M5 11.4 H6.8 M8 11.4 H9.8 M11 11.4 H12.8" stroke="#7a7a7a" stroke-width="1.1"/></svg>
<svg class="a" style="left:552px;top:601px;" width="16" height="16" viewBox="0 0 16 16"><rect x="1.8" y="1.8" width="12" height="12" fill="#e0e0e0" stroke="#6a6a6a" stroke-width="1.6"/><path d="M5.8 1.8 V13.8 M9.8 1.8 V13.8 M1.8 5.8 H13.8 M1.8 9.8 H13.8" stroke="#6a6a6a" stroke-width="1.5"/></svg>
<svg class="a" style="left:590px;top:601px;" width="16" height="16" viewBox="0 0 16 16"><rect x="1.5" y="1.5" width="13" height="13" fill="none" stroke="#6a6a6a" stroke-width="1.2"/><rect x="4.5" y="4" width="7" height="8" fill="none" stroke="#6a6a6a" stroke-width="1.2"/><path d="M6 6.3 H10 M6 8 H10 M6 9.7 H10" stroke="#6a6a6a" stroke-width="1"/></svg>
<svg class="a" style="left:628px;top:601px;" width="16" height="16" viewBox="0 0 16 16"><rect x="1.5" y="1.5" width="13" height="13" fill="none" stroke="#6a6a6a" stroke-width="1.2"/><path d="M5 1.5 V8.5 H14.5 M9.2 1.5 V8.5" fill="none" stroke="#6a6a6a" stroke-width="1.2"/></svg>
<div class="a" style="left:660px;top:608px;width:6px;height:2px;background:#6a6a6a;"></div>
<div class="a" style="left:670px;top:608px;width:100px;height:1px;background:#a8a8a8;"></div>
<div class="a" style="left:718px;top:603px;width:4px;height:11px;background:#6a6a6a;"></div>
<div class="a" style="left:774px;top:608px;width:8px;height:2px;background:#6a6a6a;"></div>
<div class="a" style="left:777px;top:604px;width:2px;height:9px;background:#6a6a6a;"></div>
<div class="a" style="left:23px;top:546px;width:59px;height:47px;border:1px solid rgba(255,255,255,0.7);border-radius:6px;"></div>
<div class="a" style="left:25px;top:548px;width:52px;height:39px;border:3px solid rgba(165,165,165,0.6);border-radius:6px;background:rgba(235,235,235,0.2)"></div>
<svg class="a" style="left:28px;top:551px;" width="28" height="28" viewBox="0 0 28 28"><path d="M24.5 23.5 L6 6.5" stroke="rgba(150,150,150,0.6)" stroke-width="3" stroke-linecap="round"/><path d="M2.5 2.5 L13.5 4.5 L4.5 13.5 Z" fill="rgba(150,150,150,0.6)"/></svg>
<svg class="a" style="left:28px;top:578px;" width="35" height="10" viewBox="0 0 35 10"><path d="M5 1.5 L1.5 5 L5 8.5 Z M29 1.5 L32.5 5 L29 8.5 Z" fill="rgba(200,200,200,0.5)"/></svg>
<div class="a" style="left:42px;top:595px;width:19px;height:4px;border:1px solid rgba(190,190,190,0.6);border-bottom:0;border-radius:3px 3px 0 0"></div>
<div class="a" style="left:439px;top:491px;width:158px;height:55px;border:3px solid #fc3a3c;box-shadow:0 3px 6px rgba(0,0,0,0.35), inset 0 4px 3px rgba(0,0,0,0.25)"></div>
<div class="a t" style="left:375.84px;top:14px;font-size:12px;line-height:12px;color:#ffffff;font-weight:normal;font-style:normal;font-family:'Liberation Sans';transform:scaleX(0.9570);transform-origin:0 0;">горяч.xlsx - Excel</div>
<div class="a t" style="left:15.60px;top:42px;font-size:12px;line-height:12px;color:#ffffff;font-weight:normal;font-style:normal;font-family:'Liberation Sans';">Файл</div>
<div class="a t" style="left:67.62px;top:42px;font-size:12px;line-height:12px;color:#217346;font-weight:normal;font-style:normal;font-family:'Liberation Sans';transform:scaleX(0.9773);transform-origin:0 0;">Главная</div>
<div class="a t" style="left:122.78px;top:42px;font-size:12px;line-height:12px;color:#ffffff;font-weight:normal;font-style:normal;font-family:'Liberation Sans';transform:scaleX(0.9250);transform-origin:0 0;">Вставка</div>
<div class="a t" style="left:174.77px;top:42px;font-size:12px;line-height:12px;color:#ffffff;font-weight:normal;font-style:normal;font-family:'Liberation Sans';transform:scaleX(0.9272);transform-origin:0 0;">Разметка страни</div>
<div class="a t" style="left:270.36px;top:42px;font-size:12px;line-height:12px;color:#ffffff;font-weight:normal;font-style:normal;font-family:'Liberation Sans';transform:scaleX(1.0392);transform-origin:0 0;">Формулы</div>
<div class="a t" style="left:336.20px;top:42px;font-size:12px;line-height:12px;color:#ffffff;font-weight:normal;font-style:normal;font-family:'Liberation Sans';transform:scaleX(0.9791);transform-origin:0 0;">Данные</div>
<div class="a t" style="left:388.70px;top:42px;font-size:12px;line-height:12px;color:#ffffff;font-weight:normal;font-style:normal;font-family:'Liberation Sans';">Рецензировани</div>
<div class="a t" style="left:483.36px;top:42px;font-size:12px;line-height:12px;color:#ffffff;font-weight:normal;font-style:normal;font-family:'Liberation Sans';transform:scaleX(0.9381);transform-origin:0 0;">Вид</div>
<div class="a t" style="left:514.29px;top:42px;font-size:12px;line-height:12px;color:#ffffff;font-weight:normal;font-style:normal;font-family:'Liberation Sans';transform:scaleX(1.0087);transform-origin:0 0;">Разработчик</div>
<div class="a t" style="left:617.41px;top:42px;font-size:12px;line-height:12px;color:#bcd3c5;font-weight:normal;font-style:normal;font-family:'Liberation Sans';transform:scaleX(1.0889);transform-origin:0 0;">Помощн</div>
<div class="a t" style="left:677.06px;top:42px;font-size:12px;line-height:12px;color:#ffffff;font-weight:normal;font-style:normal;font-family:'Liberation Sans';transform:scaleX(0.9423);transform-origin:0 0;">Вход</div>
<div class="a t" style="left:739.20px;top:42px;font-size:12px;line-height:12px;color:#ffffff;font-weight:normal;font-style:normal;font-family:'Liberation Sans';transform:scaleX(1.0063);transform-origin:0 0;">Общий доступ</div>
<div class="a t" style="left:7.64px;top:103px;font-size:12px;line-height:12px;color:#333333;font-weight:normal;font-style:normal;font-family:'Liberation Sans';transform:scaleX(0.9571);transform-origin:0 0;">Вставить</div>
<div class="a t" style="left:3.68px;top:139px;font-size:11px;line-height:11px;color:#666666;font-weight:normal;font-style:normal;font-family:'Liberation Sans';transform:scaleX(1.0243);transform-origin:0 0;">Буфер обмена</div>
<div class="a t" style="left:107.57px;top:69px;font-size:12px;line-height:12px;color:#262626;font-weight:normal;font-style:normal;font-family:'Liberation Sans';transform:scaleX(1.0312);transform-origin:0 0;">Calibri</div>
<div class="a t" style="left:196.13px;top:69px;font-size:12px;line-height:12px;color:#262626;font-weight:normal;font-style:normal;font-family:'Liberation Sans';transform:scaleX(0.8727);transform-origin:0 0;">11</div>
<div class="a t" style="left:142.71px;top:139px;font-size:11px;line-height:11px;color:#666666;font-weight:normal;font-style:normal;font-family:'Liberation Sans';transform:scaleX(1.0857);transform-origin:0 0;">Шрифт</div>
<div class="a t" style="left:248.69px;top:139px;font-size:11px;line-height:11px;color:#666666;font-weight:normal;font-style:normal;font-family:'Liberation Sans';transform:scaleX(1.0608);transform-origin:0 0;">Выравнивание</div>
<div class="a t" style="left:361.70px;top:68px;font-size:12px;line-height:12px;color:#262626;font-weight:normal;font-style:normal;font-family:'Liberation Sans';transform:scaleX(1.0231);transform-origin:0 0;">Общий</div>
<div class="a t" style="left:372.73px;top:139px;font-size:11px;line-height:11px;color:#666666;font-weight:normal;font-style:normal;font-family:'Liberation Sans';transform:scaleX(1.0200);transform-origin:0 0;">Число</div>
<div class="a t" style="left:467.00px;top:69px;font-size:12px;line-height:12px;color:#3a3a3a;font-weight:normal;font-style:normal;font-family:'Liberation Sans';">Условное форматирование</div>
<div class="a t" style="left:465.99px;top:92px;font-size:12px;line-height:12px;color:#3a3a3a;font-weight:normal;font-style:normal;font-family:'Liberation Sans';transform:scaleX(1.0058);transform-origin:0 0;">Форматировать как таблицу</div>
<div class="a t" style="left:466.00px;top:115px;font-size:12px;line-height:12px;color:#3a3a3a;font-weight:normal;font-style:normal;font-family:'Liberation Sans';">Стили ячеек</div>
<div class="a t" style="left:525.50px;top:139px;font-size:11px;line-height:11px;color:#666666;font-weight:normal;font-style:normal;font-family:'Liberation Sans';">Стили</div>
<div class="a t" style="left:644.99px;top:101px;font-size:12px;line-height:12px;color:#3a3a3a;font-weight:normal;font-style:normal;font-family:'Liberation Sans';transform:scaleX(1.0128);transform-origin:0 0;">Ячейки</div>
<div class="a t" style="left:692.42px;top:101px;font-size:12px;line-height:12px;color:#3a3a3a;font-weight:normal;font-style:normal;font-family:'Liberation Sans';transform:scaleX(0.9844);transform-origin:0 0;">Редактирование</div>
<div class="a t" style="left:13.00px;top:171px;font-size:12.5px;line-height:12.5px;color:#262626;font-weight:normal;font-style:normal;font-family:'Liberation Sans';transform:scaleX(0.9500);transform-origin:0 0;">J12</div>
<div class="a t" style="left:34.50px;top:203px;font-size:12.5px;line-height:12.5px;color:#262626;font-weight:normal;font-style:normal;font-family:'Liberation Sans';">A</div>
<div class="a t" style="left:78.50px;top:203px;font-size:12.5px;line-height:12.5px;color:#262626;font-weight:normal;font-style:normal;font-family:'Liberation Sans';">B</div>
<div class="a t" style="left:174.50px;top:203px;font-size:12.5px;line-height:12.5px;color:#262626;font-weight:normal;font-style:normal;font-family:'Liberation Sans';">C</div>
<div class="a t" style="left:288.50px;top:203px;font-size:12.5px;line-height:12.5px;color:#262626;font-weight:normal;font-style:normal;font-family:'Liberation Sans';">D</div>
<div class="a t" style="left:391.50px;top:203px;font-size:12.5px;line-height:12.5px;color:#262626;font-weight:normal;font-style:normal;font-family:'Liberation Sans';">E</div>
<div class="a t" style="left:476.00px;top:203px;font-size:12.5px;line-height:12.5px;color:#262626;font-weight:normal;font-style:normal;font-family:'Liberation Sans';">F</div>
<div class="a t" style="left:515.50px;top:203px;font-size:12.5px;line-height:12.5px;color:#262626;font-weight:normal;font-style:normal;font-family:'Liberation Sans';">G</div>
<div class="a t" style="left:556.50px;top:203px;font-size:12.5px;line-height:12.5px;color:#262626;font-weight:normal;font-style:normal;font-family:'Liberation Sans';">H</div>
<div class="a t" style="left:623.00px;top:203px;font-size:12.5px;line-height:12.5px;color:#262626;font-weight:normal;font-style:normal;font-family:'Liberation Sans';">I</div>
<div class="a t" style="left:686.00px;top:203px;font-size:12.5px;line-height:12.5px;color:#1e6b41;font-weight:normal;font-style:normal;font-family:'Liberation Sans';">J</div>
<div class="a t" style="left:748.50px;top:203px;font-size:12.5px;line-height:12.5px;color:#262626;font-weight:normal;font-style:normal;font-family:'Liberation Sans';">K</div>
<div class="a t" style="left:814.00px;top:203px;font-size:12.5px;line-height:12.5px;color:#262626;font-weight:normal;font-style:normal;font-family:'Liberation Sans';">L</div>
<div class="a t" style="left:9.50px;top:224px;font-size:12.5px;line-height:12.5px;color:#262626;font-weight:normal;font-style:normal;font-family:'Liberation Sans';">1</div>
<div class="a t" style="left:9.50px;top:244px;font-size:12.5px;line-height:12.5px;color:#262626;font-weight:normal;font-style:normal;font-family:'Liberation Sans';">2</div>
<div class="a t" style="left:9.50px;top:264px;font-size:12.5px;line-height:12.5px;color:#262626;font-weight:normal;font-style:normal;font-family:'Liberation Sans';">3</div>
<div class="a t" style="left:10.00px;top:284px;font-size:12.5px;line-height:12.5px;color:#262626;font-weight:normal;font-style:normal;font-family:'Liberation Sans';">4</div>
<div class="a t" style="left:9.50px;top:304px;font-size:12.5px;line-height:12.5px;color:#262626;font-weight:normal;font-style:normal;font-family:'Liberation Sans';">5</div>
<div class="a t" style="left:9.50px;top:324px;font-size:12.5px;line-height:12.5px;color:#262626;font-weight:normal;font-style:normal;font-family:'Liberation Sans';">6</div>
<div class="a t" style="left:9.50px;top:344px;font-size:12.5px;line-height:12.5px;color:#262626;font-weight:normal;font-style:normal;font-family:'Liberation Sans';">7</div>
<div class="a t" style="left:10.00px;top:364px;font-size:12.5px;line-height:12.5px;color:#262626;font-weight:normal;font-style:normal;font-family:'Liberation Sans';">8</div>
<div class="a t" style="left:9.50px;top:384px;font-size:12.5px;line-height:12.5px;color:#262626;font-weight:normal;font-style:normal;font-family:'Liberation Sans';">9</div>
<div class="a t" style="left:6.00px;top:404px;font-size:12.5px;line-height:12.5px;color:#262626;font-weight:normal;font-style:normal;font-family:'Liberation Sans';">10</div>
<div class="a t" style="left:6.50px;top:424px;font-size:12.5px;line-height:12.5px;color:#262626;font-weight:normal;font-style:normal;font-family:'Liberation Sans';">11</div>
<div class="a t" style="left:6.00px;top:444px;font-size:12.5px;line-height:12.5px;color:#1e6b41;font-weight:normal;font-style:normal;font-family:'Liberation Sans';">12</div>
<div class="a t" style="left:6.00px;top:464px;font-size:12.5px;line-height:12.5px;color:#262626;font-weight:normal;font-style:normal;font-family:'Liberation Sans';">13</div>
<div class="a t" style="left:6.00px;top:484px;font-size:12.5px;line-height:12.5px;color:#262626;font-weight:normal;font-style:normal;font-family:'Liberation Sans';">14</div>
<div class="a t" style="left:6.00px;top:528px;font-size:12.5px;line-height:12.5px;color:#262626;font-weight:normal;font-style:normal;font-family:'Liberation Sans';">15</div>
<div class="a t" style="left:6.00px;top:548px;font-size:12.5px;line-height:12.5px;color:#262626;font-weight:normal;font-style:normal;font-family:'Liberation Sans';">16</div>
<div class="a t" style="left:8.63px;top:603px;font-size:11px;line-height:11px;color:#4a4a4a;font-weight:normal;font-style:normal;font-family:'Liberation Sans';transform:scaleX(1.0697);transform-origin:0 0;">Готово</div>
<div class="a t" style="left:797.84px;top:603px;font-size:11px;line-height:11px;color:#4a4a4a;font-weight:normal;font-style:normal;font-family:'Liberation Sans';transform:scaleX(0.9630);transform-origin:0 0;">100%</div>
<div class="a t" style="left:75.44px;top:243px;font-size:13.5px;line-height:13.5px;color:#000000;font-weight:bold;font-style:normal;font-family:'Liberation Sans';transform:scaleX(1.0643);transform-origin:0 0;-webkit-text-stroke-width:0.35px;">№</div>
<div class="a t" style="left:164.30px;top:243px;font-size:13.5px;line-height:13.5px;color:#000000;font-weight:bold;font-style:normal;font-family:'Liberation Sans';transform:scaleX(0.9484);transform-origin:0 0;-webkit-text-stroke-width:0.35px;">ФИО</div>
<div class="a t" style="left:261.95px;top:243px;font-size:13.5px;line-height:13.5px;color:#000000;font-weight:bold;font-style:normal;font-family:'Liberation Sans';transform:scaleX(0.9545);transform-origin:0 0;-webkit-text-stroke-width:0.35px;">Категория</div>
<div class="a t" style="left:366.59px;top:243px;font-size:13.5px;line-height:13.5px;color:#000000;font-weight:bold;font-style:normal;font-family:'Liberation Sans';transform:scaleX(1.0140);transform-origin:0 0;-webkit-text-stroke-width:0.35px;">Предмет</div>
<div class="a t" style="left:450.76px;top:243px;font-size:13.5px;line-height:13.5px;color:#000000;font-weight:bold;font-style:normal;font-family:'Liberation Sans';transform:scaleX(0.9355);transform-origin:0 0;-webkit-text-stroke-width:0.35px;">Зарплата</div>
<div class="a t" style="left:535.19px;top:243px;font-size:13.5px;line-height:13.5px;color:#000000;font-weight:bold;font-style:normal;font-family:'Liberation Sans';transform:scaleX(1.0120);transform-origin:0 0;-webkit-text-stroke-width:0.35px;">Премия</div>
<div class="a t" style="left:80.07px;top:263px;font-size:13.5px;line-height:13.5px;color:#000000;font-weight:normal;font-style:normal;font-family:'Liberation Sans';transform:scaleX(0.9833);transform-origin:0 0;-webkit-text-stroke-width:0.35px;">1</div>
<div class="a t" style="left:117.61px;top:263px;font-size:13.5px;line-height:13.5px;color:#000000;font-weight:normal;font-style:normal;font-family:'Liberation Sans';transform:scaleX(0.9877);transform-origin:0 0;-webkit-text-stroke-width:0.35px;">Петрова Н.В.</div>
<div class="a t" style="left:270.80px;top:263px;font-size:13.5px;line-height:13.5px;color:#000000;font-weight:normal;font-style:normal;font-family:'Liberation Sans';-webkit-text-stroke-width:0.35px;">Первая</div>
<div class="a t" style="left:346.28px;top:263px;font-size:13.5px;line-height:13.5px;color:#000000;font-weight:normal;font-style:normal;font-family:'Liberation Sans';transform:scaleX(1.0227);transform-origin:0 0;-webkit-text-stroke-width:0.35px;">Физика</div>
<div class="a t" style="left:469.33px;top:263px;font-size:13.5px;line-height:13.5px;color:#000000;font-weight:normal;font-style:normal;font-family:'Liberation Sans';transform:scaleX(0.9714);transform-origin:0 0;-webkit-text-stroke-width:0.35px;">300</div>
<div class="a t" style="left:549.81px;top:263px;font-size:13.5px;line-height:13.5px;color:#000000;font-weight:normal;font-style:normal;font-family:'Liberation Sans';transform:scaleX(0.9905);transform-origin:0 0;-webkit-text-stroke-width:0.35px;">100</div>
<div class="a t" style="left:80.07px;top:283px;font-size:13.5px;line-height:13.5px;color:#000000;font-weight:normal;font-style:normal;font-family:'Liberation Sans';transform:scaleX(0.9833);transform-origin:0 0;-webkit-text-stroke-width:0.35px;">2</div>
<div class="a t" style="left:153.06px;top:283px;font-size:13.5px;line-height:13.5px;color:#000000;font-weight:normal;font-style:normal;font-family:'Liberation Sans';transform:scaleX(1.0410);transform-origin:0 0;-webkit-text-stroke-width:0.35px;">Иванова Д.М.</div>
<div class="a t" style="left:270.80px;top:283px;font-size:13.5px;line-height:13.5px;color:#000000;font-weight:normal;font-style:normal;font-family:'Liberation Sans';-webkit-text-stroke-width:0.35px;">Первая</div>
<div class="a t" style="left:346.27px;top:283px;font-size:13.5px;line-height:13.5px;color:#000000;font-weight:normal;font-style:normal;font-family:'Liberation Sans';transform:scaleX(1.0267);transform-origin:0 0;-webkit-text-stroke-width:0.35px;">Математика</div>
<div class="a t" style="left:469.33px;top:283px;font-size:13.5px;line-height:13.5px;color:#000000;font-weight:normal;font-style:normal;font-family:'Liberation Sans';transform:scaleX(0.9714);transform-origin:0 0;-webkit-text-stroke-width:0.35px;">300</div>
<div class="a t" style="left:549.81px;top:283px;font-size:13.5px;line-height:13.5px;color:#000000;font-weight:normal;font-style:normal;font-family:'Liberation Sans';transform:scaleX(0.9905);transform-origin:0 0;-webkit-text-stroke-width:0.35px;">100</div>
<div class="a t" style="left:80.07px;top:303px;font-size:13.5px;line-height:13.5px;color:#000000;font-weight:normal;font-style:normal;font-family:'Liberation Sans';transform:scaleX(0.9833);transform-origin:0 0;-webkit-text-stroke-width:0.35px;">3</div>
<div class="a t" style="left:174.40px;top:303px;font-size:13.5px;line-height:13.5px;color:#000000;font-weight:normal;font-style:normal;font-family:'Liberation Sans';-webkit-text-stroke-width:0.35px;">Козел П.Э.</div>
<div class="a t" style="left:271.80px;top:303px;font-size:13.5px;line-height:13.5px;color:#000000;font-weight:normal;font-style:normal;font-family:'Liberation Sans';-webkit-text-stroke-width:0.35px;">Вторая</div>
<div class="a t" style="left:346.28px;top:303px;font-size:13.5px;line-height:13.5px;color:#000000;font-weight:normal;font-style:normal;font-family:'Liberation Sans';transform:scaleX(1.0196);transform-origin:0 0;-webkit-text-stroke-width:0.35px;">История</div>
<div class="a t" style="left:469.33px;top:303px;font-size:13.5px;line-height:13.5px;color:#000000;font-weight:normal;font-style:normal;font-family:'Liberation Sans';transform:scaleX(0.9714);transform-origin:0 0;-webkit-text-stroke-width:0.35px;">200</div>
<div class="a t" style="left:549.81px;top:303px;font-size:13.5px;line-height:13.5px;color:#000000;font-weight:normal;font-style:normal;font-family:'Liberation Sans';transform:scaleX(0.9905);transform-origin:0 0;-webkit-text-stroke-width:0.35px;">100</div>
<div class="a t" style="left:81.05px;top:323px;font-size:13.5px;line-height:13.5px;color:#000000;font-weight:normal;font-style:normal;font-family:'Liberation Sans';transform:scaleX(0.8429);transform-origin:0 0;-webkit-text-stroke-width:0.35px;">4</div>
<div class="a t" style="left:138.48px;top:323px;font-size:13.5px;line-height:13.5px;color:#000000;font-weight:normal;font-style:normal;font-family:'Liberation Sans';transform:scaleX(1.0202);transform-origin:0 0;-webkit-text-stroke-width:0.35px;">Мартынова Л.П.</div>
<div class="a t" style="left:270.80px;top:323px;font-size:13.5px;line-height:13.5px;color:#000000;font-weight:normal;font-style:normal;font-family:'Liberation Sans';-webkit-text-stroke-width:0.35px;">Первая</div>
<div class="a t" style="left:346.27px;top:323px;font-size:13.5px;line-height:13.5px;color:#000000;font-weight:normal;font-style:normal;font-family:'Liberation Sans';transform:scaleX(1.0267);transform-origin:0 0;-webkit-text-stroke-width:0.35px;">Математика</div>
<div class="a t" style="left:469.33px;top:323px;font-size:13.5px;line-height:13.5px;color:#000000;font-weight:normal;font-style:normal;font-family:'Liberation Sans';transform:scaleX(0.9714);transform-origin:0 0;-webkit-text-stroke-width:0.35px;">300</div>
<div class="a t" style="left:549.81px;top:323px;font-size:13.5px;line-height:13.5px;color:#000000;font-weight:normal;font-style:normal;font-family:'Liberation Sans';transform:scaleX(0.9905);transform-origin:0 0;-webkit-text-stroke-width:0.35px;">100</div>
<div class="a t" style="left:80.07px;top:343px;font-size:13.5px;line-height:13.5px;color:#000000;font-weight:normal;font-style:normal;font-family:'Liberation Sans';transform:scaleX(0.9833);transform-origin:0 0;-webkit-text-stroke-width:0.35px;">5</div>
<div class="a t" style="left:141.28px;top:343px;font-size:13.5px;line-height:13.5px;color:#000000;font-weight:normal;font-style:normal;font-family:'Liberation Sans';transform:scaleX(1.0229);transform-origin:0 0;-webkit-text-stroke-width:0.35px;">Боцмонова Т.А.</div>
<div class="a t" style="left:270.80px;top:343px;font-size:13.5px;line-height:13.5px;color:#000000;font-weight:normal;font-style:normal;font-family:'Liberation Sans';-webkit-text-stroke-width:0.35px;">Первая</div>
<div class="a t" style="left:346.30px;top:343px;font-size:13.5px;line-height:13.5px;color:#000000;font-weight:normal;font-style:normal;font-family:'Liberation Sans';transform:scaleX(1.0047);transform-origin:0 0;-webkit-text-stroke-width:0.35px;">Физ-ра</div>
<div class="a t" style="left:469.33px;top:343px;font-size:13.5px;line-height:13.5px;color:#000000;font-weight:normal;font-style:normal;font-family:'Liberation Sans';transform:scaleX(0.9714);transform-origin:0 0;-webkit-text-stroke-width:0.35px;">300</div>
<div class="a t" style="left:549.81px;top:343px;font-size:13.5px;line-height:13.5px;color:#000000;font-weight:normal;font-style:normal;font-family:'Liberation Sans';transform:scaleX(0.9905);transform-origin:0 0;-webkit-text-stroke-width:0.35px;">100</div>
<div class="a t" style="left:80.07px;top:363px;font-size:13.5px;line-height:13.5px;color:#000000;font-weight:normal;font-style:normal;font-family:'Liberation Sans';transform:scaleX(0.9833);transform-origin:0 0;-webkit-text-stroke-width:0.35px;">6</div>
<div class="a t" style="left:145.98px;top:363px;font-size:13.5px;line-height:13.5px;color:#000000;font-weight:normal;font-style:normal;font-family:'Liberation Sans';transform:scaleX(1.0163);transform-origin:0 0;-webkit-text-stroke-width:0.35px;">Пелерман В.И.</div>
<div class="a t" style="left:269.63px;top:363px;font-size:13.5px;line-height:13.5px;color:#000000;font-weight:normal;font-style:normal;font-family:'Liberation Sans';transform:scaleX(0.9673);transform-origin:0 0;-webkit-text-stroke-width:0.35px;">Высшая</div>
<div class="a t" style="left:346.30px;top:363px;font-size:13.5px;line-height:13.5px;color:#000000;font-weight:normal;font-style:normal;font-family:'Liberation Sans';-webkit-text-stroke-width:0.35px;">Русский язык</div>
<div class="a t" style="left:470.30px;top:363px;font-size:13.5px;line-height:13.5px;color:#000000;font-weight:normal;font-style:normal;font-family:'Liberation Sans';transform:scaleX(0.9273);transform-origin:0 0;-webkit-text-stroke-width:0.35px;">400</div>
<div class="a t" style="left:557.90px;top:363px;font-size:13.5px;line-height:13.5px;color:#000000;font-weight:normal;font-style:normal;font-family:'Liberation Sans';transform:scaleX(0.9429);transform-origin:0 0;-webkit-text-stroke-width:0.35px;">0</div>
<div class="a t" style="left:80.07px;top:383px;font-size:13.5px;line-height:13.5px;color:#000000;font-weight:normal;font-style:normal;font-family:'Liberation Sans';transform:scaleX(0.9833);transform-origin:0 0;-webkit-text-stroke-width:0.35px;">7</div>
<div class="a t" style="left:117.59px;top:383px;font-size:13.5px;line-height:13.5px;color:#000000;font-weight:normal;font-style:normal;font-family:'Liberation Sans';transform:scaleX(1.0143);transform-origin:0 0;-webkit-text-stroke-width:0.35px;">Ушаков П.М.</div>
<div class="a t" style="left:271.80px;top:383px;font-size:13.5px;line-height:13.5px;color:#000000;font-weight:normal;font-style:normal;font-family:'Liberation Sans';-webkit-text-stroke-width:0.35px;">Вторая</div>
<div class="a t" style="left:346.27px;top:383px;font-size:13.5px;line-height:13.5px;color:#000000;font-weight:normal;font-style:normal;font-family:'Liberation Sans';transform:scaleX(1.0316);transform-origin:0 0;-webkit-text-stroke-width:0.35px;">Биология</div>
<div class="a t" style="left:469.33px;top:383px;font-size:13.5px;line-height:13.5px;color:#000000;font-weight:normal;font-style:normal;font-family:'Liberation Sans';transform:scaleX(0.9714);transform-origin:0 0;-webkit-text-stroke-width:0.35px;">200</div>
<div class="a t" style="left:549.81px;top:383px;font-size:13.5px;line-height:13.5px;color:#000000;font-weight:normal;font-style:normal;font-family:'Liberation Sans';transform:scaleX(0.9905);transform-origin:0 0;-webkit-text-stroke-width:0.35px;">100</div>
<div class="a t" style="left:80.07px;top:403px;font-size:13.5px;line-height:13.5px;color:#000000;font-weight:normal;font-style:normal;font-family:'Liberation Sans';transform:scaleX(0.9833);transform-origin:0 0;-webkit-text-stroke-width:0.35px;">8</div>
<div class="a t" style="left:117.57px;top:403px;font-size:13.5px;line-height:13.5px;color:#000000;font-weight:normal;font-style:normal;font-family:'Liberation Sans';transform:scaleX(1.0326);transform-origin:0 0;-webkit-text-stroke-width:0.35px;">Георгиев Д.М.</div>
<div class="a t" style="left:256.36px;top:403px;font-size:13.5px;line-height:13.5px;color:#000000;font-weight:normal;font-style:normal;font-family:'Liberation Sans';transform:scaleX(0.9853);transform-origin:0 0;-webkit-text-stroke-width:0.35px;">Специалист</div>
<div class="a t" style="left:346.32px;top:403px;font-size:13.5px;line-height:13.5px;color:#000000;font-weight:normal;font-style:normal;font-family:'Liberation Sans';transform:scaleX(0.9773);transform-origin:0 0;-webkit-text-stroke-width:0.35px;">География</div>
<div class="a t" style="left:469.33px;top:403px;font-size:13.5px;line-height:13.5px;color:#000000;font-weight:normal;font-style:normal;font-family:'Liberation Sans';transform:scaleX(0.9714);transform-origin:0 0;-webkit-text-stroke-width:0.35px;">100</div>
<div class="a t" style="left:557.90px;top:403px;font-size:13.5px;line-height:13.5px;color:#000000;font-weight:normal;font-style:normal;font-family:'Liberation Sans';transform:scaleX(0.9429);transform-origin:0 0;-webkit-text-stroke-width:0.35px;">0</div>
<div class="a t" style="left:80.07px;top:423px;font-size:13.5px;line-height:13.5px;color:#000000;font-weight:normal;font-style:normal;font-family:'Liberation Sans';transform:scaleX(0.9833);transform-origin:0 0;-webkit-text-stroke-width:0.35px;">9</div>
<div class="a t" style="left:117.61px;top:423px;font-size:13.5px;line-height:13.5px;color:#000000;font-weight:normal;font-style:normal;font-family:'Liberation Sans';transform:scaleX(0.9912);transform-origin:0 0;-webkit-text-stroke-width:0.35px;">Соколов К.С.</div>
<div class="a t" style="left:256.36px;top:423px;font-size:13.5px;line-height:13.5px;color:#000000;font-weight:normal;font-style:normal;font-family:'Liberation Sans';transform:scaleX(0.9853);transform-origin:0 0;-webkit-text-stroke-width:0.35px;">Специалист</div>
<div class="a t" style="left:346.28px;top:423px;font-size:13.5px;line-height:13.5px;color:#000000;font-weight:normal;font-style:normal;font-family:'Liberation Sans';transform:scaleX(1.0205);transform-origin:0 0;-webkit-text-stroke-width:0.35px;">Химия</div>
<div class="a t" style="left:469.33px;top:423px;font-size:13.5px;line-height:13.5px;color:#000000;font-weight:normal;font-style:normal;font-family:'Liberation Sans';transform:scaleX(0.9714);transform-origin:0 0;-webkit-text-stroke-width:0.35px;">100</div>
<div class="a t" style="left:557.90px;top:423px;font-size:13.5px;line-height:13.5px;color:#000000;font-weight:normal;font-style:normal;font-family:'Liberation Sans';transform:scaleX(0.9429);transform-origin:0 0;-webkit-text-stroke-width:0.35px;">0</div>
<div class="a t" style="left:76.69px;top:443px;font-size:13.5px;line-height:13.5px;color:#000000;font-weight:normal;font-style:normal;font-family:'Liberation Sans';transform:scaleX(0.9143);transform-origin:0 0;-webkit-text-stroke-width:0.35px;">10</div>
<div class="a t" style="left:117.65px;top:443px;font-size:13.5px;line-height:13.5px;color:#000000;font-weight:normal;font-style:normal;font-family:'Liberation Sans';transform:scaleX(0.9471);transform-origin:0 0;-webkit-text-stroke-width:0.35px;">Седов С.С.</div>
<div class="a t" style="left:269.63px;top:443px;font-size:13.5px;line-height:13.5px;color:#000000;font-weight:normal;font-style:normal;font-family:'Liberation Sans';transform:scaleX(0.9673);transform-origin:0 0;-webkit-text-stroke-width:0.35px;">Высшая</div>
<div class="a t" style="left:346.27px;top:443px;font-size:13.5px;line-height:13.5px;color:#000000;font-weight:normal;font-style:normal;font-family:'Liberation Sans';transform:scaleX(1.0267);transform-origin:0 0;-webkit-text-stroke-width:0.35px;">Математика</div>
<div class="a t" style="left:470.30px;top:443px;font-size:13.5px;line-height:13.5px;color:#000000;font-weight:normal;font-style:normal;font-family:'Liberation Sans';transform:scaleX(0.9273);transform-origin:0 0;-webkit-text-stroke-width:0.35px;">400</div>
<div class="a t" style="left:557.90px;top:443px;font-size:13.5px;line-height:13.5px;color:#000000;font-weight:normal;font-style:normal;font-family:'Liberation Sans';transform:scaleX(0.9429);transform-origin:0 0;-webkit-text-stroke-width:0.35px;">0</div>
<div class="a t" style="left:117.33px;top:515px;font-size:13.5px;line-height:13.5px;color:#000000;font-weight:bold;font-style:normal;font-family:'Liberation Sans';transform:scaleX(0.9688);transform-origin:0 0;-webkit-text-stroke-width:0.35px;">Полужирный текст</div>
<div class="a t" style="left:258.40px;top:504px;font-size:13.5px;line-height:13.5px;color:#000000;font-weight:normal;font-style:italic;font-family:'Liberation Sans';transform:scaleX(1.0147);transform-origin:0 0;-webkit-text-stroke-width:0.35px;">Курсивный</div>
<div class="a t" style="left:271.40px;top:525px;font-size:13.5px;line-height:13.5px;color:#000000;font-weight:normal;font-style:italic;font-family:'Liberation Sans';-webkit-text-stroke-width:0.35px;">текст</div>
<div class="a t" style="left:348.66px;top:505px;font-size:13.5px;line-height:13.5px;color:#000000;font-weight:normal;font-style:normal;font-family:'Liberation Sans';transform:scaleX(1.0449);transform-origin:0 0;-webkit-text-stroke-width:0.35px;">Подчеркнутый</div>
<div class="a t" style="left:380.50px;top:524px;font-size:13.5px;line-height:13.5px;color:#000000;font-weight:normal;font-style:normal;font-family:'Liberation Sans';transform:scaleX(1.0063);transform-origin:0 0;-webkit-text-stroke-width:0.35px;">текст</div>
<div class="a t" style="left:451.47px;top:513px;font-size:13.5px;line-height:13.5px;color:#000000;font-weight:normal;font-style:normal;font-family:'Liberation Sans';transform:scaleX(1.0316);transform-origin:0 0;-webkit-text-stroke-width:0.35px;">Перечеркнутый текст</div>
<div class="a t" style="left:109.70px;top:91px;font-size:12.5px;line-height:12.5px;color:#444444;font-weight:bold;font-style:normal;font-family:'Liberation Sans';transform:scaleX(1.1364);transform-origin:0 0;-webkit-text-stroke-width:0.35px;">Ж</div>
<div class="a t" style="left:133.50px;top:91px;font-size:12.5px;line-height:12.5px;color:#444444;font-weight:bold;font-style:italic;font-family:'Liberation Sans';transform:scaleX(0.9750);transform-origin:0 0;-webkit-text-stroke-width:0.35px;">К</div>
<div class="a t" style="left:154.93px;top:91px;font-size:12.5px;line-height:12.5px;color:#444444;font-weight:bold;font-style:normal;font-family:'Liberation Sans';transform:scaleX(1.0714);transform-origin:0 0;-webkit-text-stroke-width:0.35px;">Ч</div>
<div class="a t" style="left:198.20px;top:92px;font-size:13.5px;line-height:13.5px;color:#444444;font-weight:normal;font-style:normal;font-family:'Liberation Sans';transform:scaleX(1.0333);transform-origin:0 0;-webkit-text-stroke-width:0.5px;">A</div>
<div class="a t" style="left:221.10px;top:94px;font-size:11px;line-height:11px;color:#444444;font-weight:normal;font-style:normal;font-family:'Liberation Sans';transform:scaleX(1.0429);transform-origin:0 0;-webkit-text-stroke-width:0.45px;">A</div>
<div class="a t" style="left:188.60px;top:113px;font-size:13px;line-height:13px;color:#555555;font-weight:bold;font-style:normal;font-family:'Liberation Sans';transform:scaleX(1.0222);transform-origin:0 0;-webkit-text-stroke-width:0.35px;">A</div>
<div class="a t" style="left:397.70px;top:90px;font-size:15px;line-height:15px;color:#444444;font-weight:normal;font-style:normal;font-family:'Liberation Sans';transform:scaleX(0.9462);transform-origin:0 0;-webkit-text-stroke-width:0.35px;">%</div>
<div class="a t" style="left:418.00px;top:92px;font-size:9.5px;line-height:9.5px;color:#444444;font-weight:normal;font-style:normal;font-family:'Liberation Sans';transform:scaleX(0.8875);transform-origin:0 0;-webkit-text-stroke-width:0.35px;">000</div>
<div class="a t" style="left:370.70px;top:110px;font-size:9.5px;line-height:9.5px;color:#444444;font-weight:normal;font-style:normal;font-family:'Liberation Sans';transform:scaleX(0.9600);transform-origin:0 0;-webkit-text-stroke-width:0.35px;">0</div>
<div class="a t" style="left:362.40px;top:119px;font-size:9.5px;line-height:9.5px;color:#444444;font-weight:normal;font-style:normal;font-family:'Liberation Sans';-webkit-text-stroke-width:0.35px;">,00</div>
<div class="a t" style="left:383.88px;top:110px;font-size:9.5px;line-height:9.5px;color:#444444;font-weight:normal;font-style:normal;font-family:'Liberation Sans';transform:scaleX(1.0250);transform-origin:0 0;-webkit-text-stroke-width:0.35px;">,00</div>
<div class="a t" style="left:388.97px;top:119px;font-size:9.5px;line-height:9.5px;color:#444444;font-weight:normal;font-style:normal;font-family:'Liberation Sans';transform:scaleX(1.0286);transform-origin:0 0;-webkit-text-stroke-width:0.35px;">,0</div>
<div class="a t" style="left:224.00px;top:170px;font-size:13px;line-height:13px;color:#666666;font-weight:bold;font-style:italic;font-family:'Liberation Serif';transform:scaleX(1.1000);transform-origin:0 0;-webkit-text-stroke-width:0.35px;">f</div>
<div class="a t" style="left:229.50px;top:173px;font-size:10px;line-height:10px;color:#666666;font-weight:bold;font-style:italic;font-family:'Liberation Serif';-webkit-text-stroke-width:0.35px;">x</div>
<div class="a t" style="left:90.93px;top:555px;font-size:33px;line-height:33px;color:#ffffff;font-weight:bold;font-style:normal;font-family:'Liberation Sans';transform:scaleX(1.0652);transform-origin:0 0;-webkit-text-stroke:4px #ffffff;opacity:0.3;">OS</div>
<div class="a t" style="left:90.93px;top:555px;font-size:33px;line-height:33px;color:transparent;font-weight:bold;font-style:normal;font-family:'Liberation Sans';transform:scaleX(1.0652);transform-origin:0 0;-webkit-text-stroke:1.6px #a0a0a0;opacity:0.6;">OS</div>
<div class="a t" style="left:90.93px;top:555px;font-size:33px;line-height:33px;color:#f5a3b4;font-weight:bold;font-style:normal;font-family:'Liberation Sans';transform:scaleX(1.0652);transform-origin:0 0;-webkit-text-stroke-width:0;opacity:0.7;">OS</div>
<div class="a t" style="left:152.56px;top:555px;font-size:33px;line-height:33px;color:#ffffff;font-weight:bold;font-style:normal;font-family:'Liberation Sans';transform:scaleX(1.1700);transform-origin:0 0;-webkit-text-stroke:4px #ffffff;opacity:0.3;">Helper</div>
<div class="a t" style="left:152.56px;top:555px;font-size:33px;line-height:33px;color:transparent;font-weight:bold;font-style:normal;font-family:'Liberation Sans';transform:scaleX(1.1700);transform-origin:0 0;-webkit-text-stroke:1.6px #a0a0a0;opacity:0.6;">Helper</div>
<div class="a t" style="left:152.56px;top:555px;font-size:33px;line-height:33px;color:#ffffff;font-weight:bold;font-style:normal;font-family:'Liberation Sans';transform:scaleX(1.1700);transform-origin:0 0;-webkit-text-stroke-width:0;opacity:0.4;">Helper</div>
<div class="a t" style="left:113.50px;top:578px;font-size:12.5px;line-height:12.5px;color:#217346;font-weight:bold;font-style:normal;font-family:'Liberation Sans';transform:scaleX(0.9472);transform-origin:0 0;-webkit-text-stroke-width:0.35px;">Лист1</div>
<div class="a t" style="left:174.40px;top:578px;font-size:12.5px;line-height:12.5px;color:#505050;font-weight:normal;font-style:normal;font-family:'Liberation Sans';transform:scaleX(0.9500);transform-origin:0 0;-webkit-text-stroke-width:0;">Лист2</div>
</body></html>
